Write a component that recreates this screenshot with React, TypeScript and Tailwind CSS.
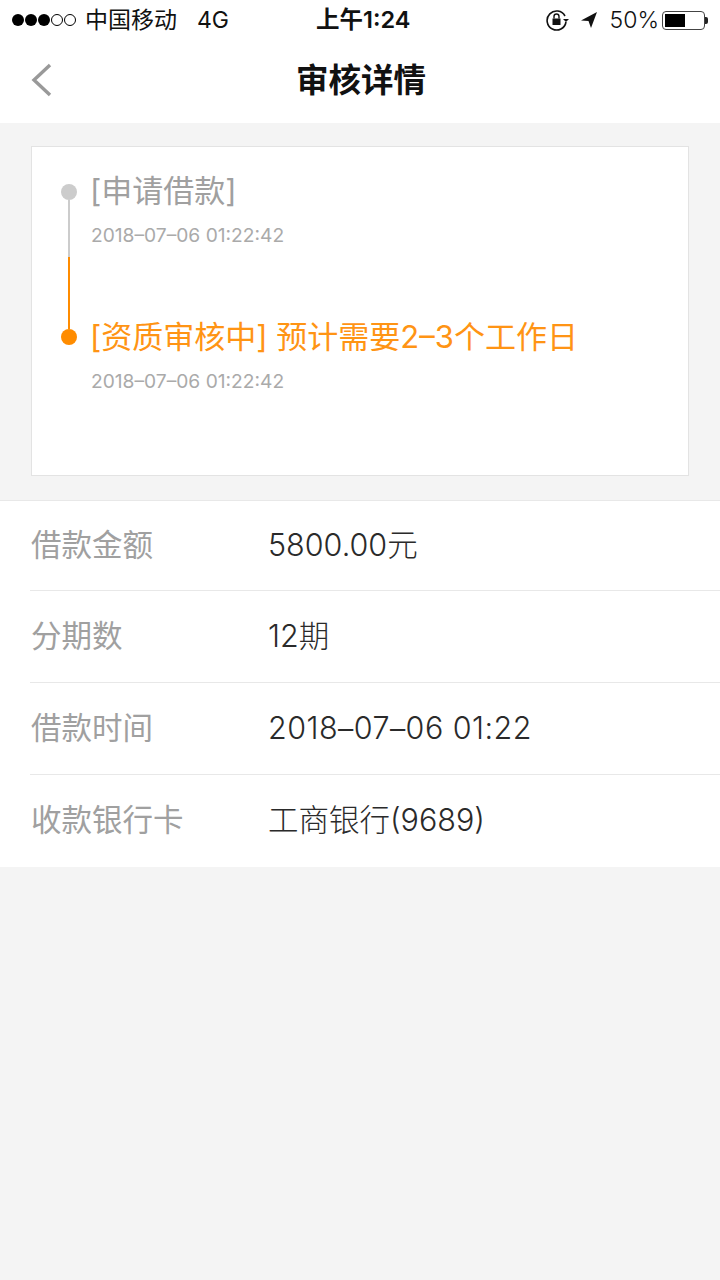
import React from "react";

const font = { fontFamily: '"Inter", "Noto Sans CJK SC", sans-serif' };

type RowProps = {
  label: string;
  value: string;
  first?: boolean;
  last?: boolean;
  wide?: boolean;
};

const InfoRow = ({ label, value, first, last, wide }: RowProps) => (
  <div className={`flex items-center pb-[2px] ${first ? "h-[90px]" : "h-[92px]"} ${last ? "" : "border-b border-[#e8e8e8]"}`}>
    <span className="ml-[1px] w-[237px] shrink-0 text-[30.5px] text-[#a0a0a0]">{label}</span>
    <span className={`text-[30.5px] font-light text-[#2a2a2a] ${wide ? "tracking-[0.45px]" : ""}`}>{value}</span>
  </div>
);

const StatusBar = () => (
  <div className="flex h-[40px] items-center bg-white pl-[12px] pr-[12px] text-[23px] text-[#111111]">
    <div className="flex w-[300px] items-center">
      <div className="flex gap-[1px]">
        <span className="h-[12px] w-[12px] rounded-full bg-black" />
        <span className="h-[12px] w-[12px] rounded-full bg-black" />
        <span className="h-[12px] w-[12px] rounded-full bg-black" />
        <span className="h-[12px] w-[12px] rounded-full border border-black" />
        <span className="h-[12px] w-[12px] rounded-full border border-black" />
      </div>
      <span className="ml-[9px]">中国移动</span>
      <span className="ml-[20px]">4G</span>
    </div>
    <span className="ml-[4px] text-[23.5px] font-semibold">上午1:24</span>
    <div className="ml-auto flex items-center">
      <svg width="24" height="24" viewBox="0 0 24 24" fill="none">
        <path d="M20 8a9.5 9.5 0 1 0 1 6" stroke="#111" strokeWidth="1.6" />
        <path d="M18 11h6l-3 3z" fill="#111" />
        <rect x="7.5" y="10.5" width="8" height="6.5" fill="#111" />
        <path d="M9 10.5V8.5a2.5 2.5 0 0 1 5 0v2" stroke="#111" strokeWidth="1.4" />
      </svg>
      <svg className="ml-[10px]" width="20" height="20" viewBox="0 0 20 20">
        <path d="M18 2L2 10.5l7.5.5L12 18z" fill="#111" />
      </svg>
      <span className="ml-[11px] font-light">50%</span>
      <div className="ml-[3px] flex items-center">
        <div className="h-[19px] w-[43px] rounded-[4px] border border-[#444444] p-[2px]">
          <div className="h-full w-[20px] bg-black" />
        </div>
        <div className="h-[7px] w-[3px] rounded-r-[2px] bg-[#222222]" />
      </div>
    </div>
  </div>
);

export default function App() {
  return (
    <div className="flex min-h-[1280px] flex-col bg-[#f4f4f4]" style={font}>
      <StatusBar />

      <div className="flex h-[83px] items-center bg-white pb-[1px]">
        <div className="flex w-[296px] pl-[30px]">
          <svg className="-mt-[3px]" width="24" height="36" viewBox="0 0 24 36" fill="none">
            <path d="M20 3L4 18l16 15" stroke="#999999" strokeWidth="3.4" />
          </svg>
        </div>
        <span className="text-[32.5px] font-bold text-[#111111]">审核详情</span>
      </div>

      <div className="mx-[31px] mt-[23px] h-[330px] border border-[#e3e3e3] bg-white pl-[29px] pt-[24px]">
        <div className="flex">
          <div className="flex w-[30px] shrink-0 flex-col pt-[13px]">
            <span className="h-[16px] w-[16px] rounded-full bg-[#cccccc]" />
            <span className="ml-[7px] h-[57px] w-[2px] bg-[#cccccc]" />
            <span className="ml-[7px] h-[72px] w-[2px] bg-[#ff8c00]" />
            <span className="h-[16px] w-[16px] rounded-full bg-[#ff8c00]" />
          </div>
          <div className="flex flex-col">
            <span className="-ml-[1px] text-[31px] leading-[40px] text-[#a0a0a0]">[申请借款]</span>
            <span className="mt-[9px] text-[19.2px] leading-[30px] text-[#aaaaaa]">2018–07–06 01:22:42</span>
            <span className="-ml-[1px] mt-[67px] text-[31px] leading-[40px] text-[#ff9414]">[资质审核中] 预计需要2–3个工作日</span>
            <span className="mt-[9px] text-[19.2px] leading-[30px] text-[#aaaaaa]">2018–07–06 01:22:42</span>
          </div>
        </div>
      </div>

      <div className="mt-[24px] border-t border-[#e8e8e8] bg-white pl-[30px]">
        <InfoRow label="借款金额" value="5800.00元" first />
        <InfoRow label="分期数" value="12期" />
        <InfoRow label="借款时间" value="2018–07–06 01:22" wide />
        <InfoRow label="收款银行卡" value="工商银行(9689)" last />
      </div>
    </div>
  );
}
